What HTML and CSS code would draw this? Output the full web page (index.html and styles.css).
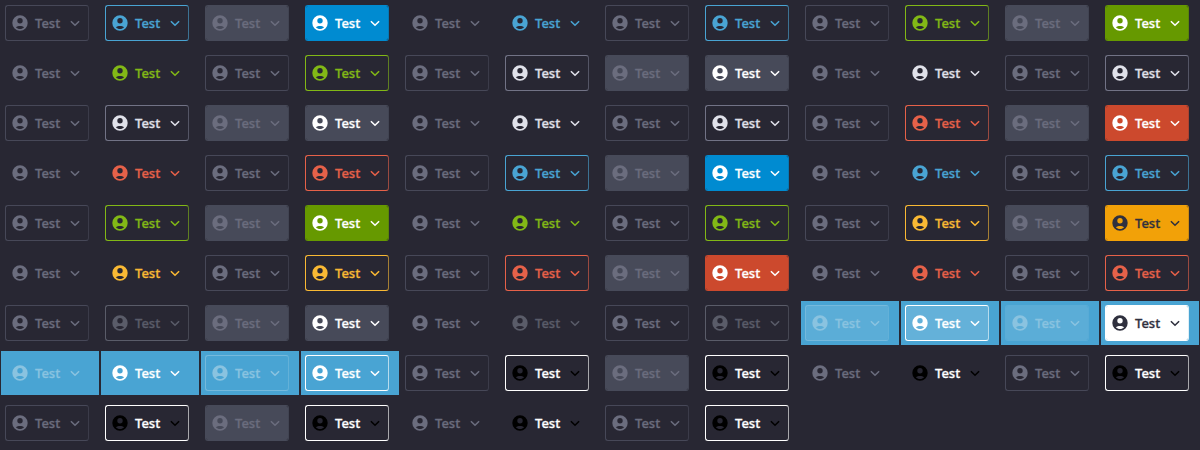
FILE: index.html
```html
<!DOCTYPE html>
<html lang="en">
<head>
<meta charset="utf-8">
<title>Buttons</title>
<link rel="stylesheet" href="styles.css">
</head>
<body>
<svg class="sprite" aria-hidden="true">
  <symbol id="user" viewBox="0 0 16 16">
    <path fill-rule="evenodd" d="M8 .3a7.7 7.7 0 1 0 0 15.4A7.7 7.7 0 0 0 8 .3zM8 3a2.7 2.7 0 1 1 0 5.4A2.7 2.7 0 0 1 8 3zM3.9 12.3C5 11.4 6.4 11 8 11s3 .4 4.1 1.3C11 13.5 9.6 14.1 8 14.1s-3-.6-4.1-1.8z"/>
  </symbol>
  <symbol id="chevron" viewBox="0 0 10 8">
    <path d="M.9 2.2L5 6.2l4.1-4" fill="none" stroke="currentColor" stroke-width="1.6"/>
  </symbol>
</svg>
<main class="grid" id="grid"></main>
<script src="main.js"></script>
</body>
</html>
```
FILE: styles.css
```css
body {
  margin: 0;
  background: #282733;
  font-family: "Noto Sans", sans-serif;
}
.sprite { display: none; }
.grid {
  display: grid;
  grid-template-columns: repeat(12, 100px);
  grid-auto-rows: 50px;
}
.cell {
  --page: #282733;
  box-sizing: border-box;
  height: 44px;
  margin: 1px;
  padding: 4px;
  background: var(--page);
}
.on-blue { --page: #49a4d3; }
.button {
  box-sizing: border-box;
  display: flex;
  align-items: center;
  width: 84px;
  height: 36px;
  padding: 0 8px 0 6px;
  border: 1px solid var(--line);
  border-right-color: color-mix(in srgb, var(--line) var(--edge, 60%), var(--page));
  border-radius: 3px;
  background: var(--fill, transparent) padding-box;
  color: var(--ink);
  font: inherit;
  font-size: 13px;
  font-weight: 500;
  line-height: 20px;
  -webkit-text-stroke: 0.3px currentColor;
}
.icon { width: 16px; height: 16px; fill: currentColor; color: var(--icon, var(--ink)); }
.label { width: 35px; margin-left: 7px; text-align: left; }
.chevron { width: 10px; height: 8px; color: var(--icon, var(--ink)); }

.blue { --ink: #49a4d3; --line: #49a4d3; --solid: #008bd1; }
.green { --ink: #82b816; --line: #82b816; --solid: #669900; }
.light { --ink: #e0e1ea; --line: #727386; --solid: #474a59; }
.red { --ink: #e66149; --line: #e66149; --solid: #cc492d; }
.amber { --ink: #f9b934; --line: #f9b934; --solid: #f2a108; }
.muted { --ink: #5a5c69; --line: #5a5c69; --solid: #474a59; }
.inverse { --ink: #fff; --line: #fff; --solid: #fff; }
.contrast { --ink: #fff; --line: #fff; --icon: #000; }
.disabled { --ink: #6b6d7e; --line: #474858; --solid: #474a59; }
.on-blue .disabled { --ink: #8ac3e0; --line: #75b9dc; --solid: #5badd7; }

.filled { --line: var(--solid); --fill: var(--solid); --ink: #fff; --edge: 82%; }
.filled.disabled { --ink: #6b6d7e; }
.filled.amber, .filled.inverse { --ink: #2f303e; }
.on-blue .filled.disabled { --line: var(--solid); --ink: #8ac3e0; }
.button.text { border-color: transparent; }
.on-blue .tinted { --fill: #64b1d9; }
.on-blue .tinted.disabled { --fill: #5badd7; }
```
FILE: main.js
```js
const themes = ["blue", "green", "light", "light", "red", "blue", "green",
  "amber", "red", "muted", "inverse", "contrast", "contrast"];
const variants = ["outline tinted", "filled", "text", "outline"];

function cell(theme, state, variant) {
  const surface = theme === "inverse" ? "cell on-blue" : "cell";
  return `<div class="${surface}"><button class="button ${state} ${variant}">
    <svg class="icon"><use href="#user"/></svg>
    <span class="label">Test</span>
    <svg class="chevron"><use href="#chevron"/></svg>
  </button></div>`;
}

document.getElementById("grid").innerHTML = themes.flatMap(theme =>
  variants.map(variant => {
    const active = theme === "contrast" && variant === "filled" ? "outline" : variant;
    return cell(theme, "disabled", variant) + cell(theme, theme, active);
  })
).join("");
```
